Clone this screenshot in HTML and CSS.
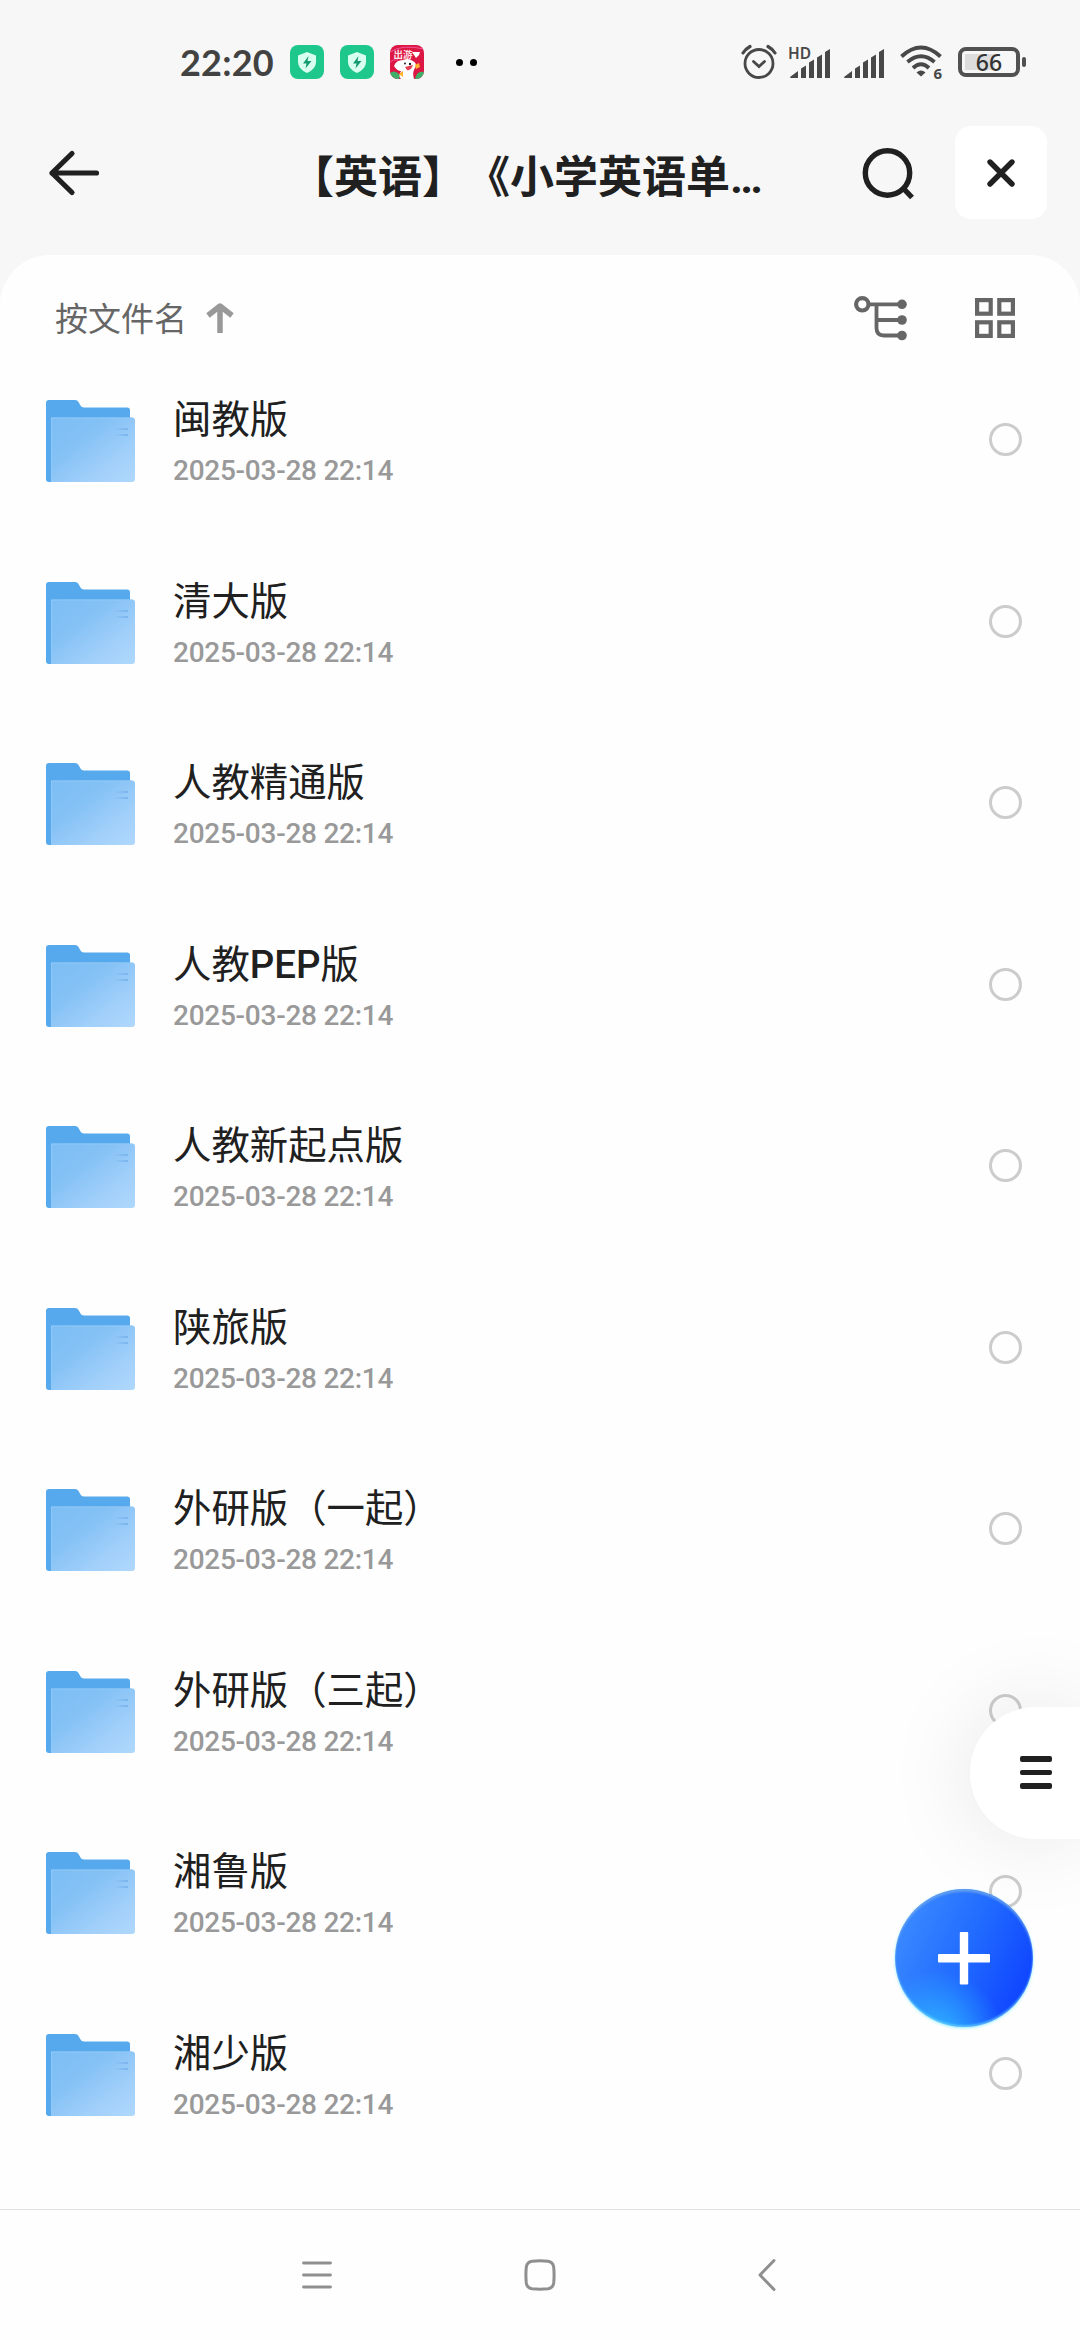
FILE: index.html
```html
<!DOCTYPE html>
<html lang="zh-CN">
<head>
<meta charset="utf-8">
<title>文件列表</title>
<link rel="stylesheet" href="styles.css">
</head>
<body>
<svg class="defs" width="0" height="0" aria-hidden="true">
  <defs>
    <linearGradient id="front" x1="0" y1="0" x2="1" y2="1">
      <stop offset="0" stop-color="#7cbef4"/><stop offset=".35" stop-color="#84c1f5"/><stop offset=".7" stop-color="#a0cffa"/><stop offset="1" stop-color="#b0d8fc"/>
    </linearGradient>
    <linearGradient id="mark" x1="0" x2="1">
      <stop offset="0" stop-color="#7ab5ee" stop-opacity=".2"/><stop offset="1" stop-color="#7ab4ec"/>
    </linearGradient>
    <symbol id="folder" viewBox="0 0 90 82">
      <path fill="#55a9ec" d="M3 0H29Q31.500 0 32.500 2L34.500 5.500Q35.500 7.500 38 7.500H81Q84 7.500 84 10.500V30H6V82H3Q0 82 0 79V3Q0 0 3 0Z"/>
      <path fill="url(#front)" d="M5 17.500H86Q89 17.500 89 20.500V79Q89 82 86 82H5Z"/>
      <path fill="none" stroke="#91c8f7" stroke-width="1" d="M5.500 81V18H86"/>
      <path fill="url(#mark)" d="M70 28H82V30H70ZM70 34H82V36H70Z"/>
    </symbol>
    <symbol id="guard" viewBox="0 0 34 34">
      <rect width="34" height="34" rx="8" fill="#1ec78c"/>
      <path fill="#d9fff0" d="M17 7L26 10.500V17Q26 24 17 28Q8 24 8 17V10.500Z"/>
      <path fill="#159b72" d="M18.500 11L13 18.500H16.500L15.500 23.500L21.500 16H17.500Z"/>
    </symbol>
    <symbol id="signal" viewBox="0 0 41 30">
      <path fill="#484848" d="M0 28L8 22V29H1Q0 29 0 28ZM11 19.500L16 16.500V29H11ZM19 13.500L24 10.500V29H19ZM27 8.500L32 5.500V29H27ZM35 3L40 0V29H35Z"/>
    </symbol>
  </defs>
</svg>

<div class="screen">
  <div class="status">
    <div class="status-left">
      <span class="clock">22:20</span>
      <svg class="app" width="34" height="34"><use href="#guard"/></svg>
      <svg class="app" width="34" height="34"><use href="#guard"/></svg>
      <svg class="app" width="34" height="34" viewBox="0 0 34 34">
        <clipPath id="round"><rect width="34" height="34" rx="8"/></clipPath>
        <g clip-path="url(#round)">
          <rect width="34" height="34" fill="#dc1743"/>
          <path fill="none" stroke="#f0569a" d="M0 7Q12 -1 34 4M0 17Q3 14 8 15"/>
          <path fill="#3fae69" d="M0 28Q5 24 10 30L9 34H0ZM34 27Q27 25 25 34H34Z"/>
          <path fill="#fff" d="M4 21Q6 15 13 15Q18 13 22 15.500Q28 18 25 23Q22 27 24 34H11Q8 31 11 26Q7 26 4 21Z"/>
          <path fill="#e23b52" d="M15 22L23 20Q21 26 17 25Z"/>
          <path fill="#ffb32c" d="M25 20L29 18L30 22L26 24ZM9 29L13 26V32Z"/>
          <circle cx="15" cy="18.500" r="1" fill="#222"/><circle cx="20" cy="19" r="1.200" fill="#222"/>
          <path fill="#fff" d="M22 7H30L29 10L26 13L24 10Z"/>
        </g>
        <text class="badge" x="3.500" y="12.800">出游</text>
      </svg>
      <span class="dots"><i></i><i></i></span>
    </div>
    <div class="status-right">
      <svg width="36" height="36" viewBox="741 44 36 36" fill="none" stroke="#484848" stroke-linecap="round">
        <circle cx="759" cy="63.500" r="14" stroke-width="2.800"/>
        <path stroke-width="2.800" d="M753.500 61.500L759 66.500L764.500 61.500"/>
        <path stroke-width="3.200" d="M743 53Q745.500 49 750 46.500M768 46.500Q772.500 49 775 53"/>
      </svg>
      <svg width="43" height="36" viewBox="788 42 43 36">
        <text class="hd" x="788" y="57">HD</text>
        <use href="#signal" x="790" y="47" width="41" height="30"/>
      </svg>
      <svg class="second" width="41" height="36" viewBox="0 -5 41 36"><use href="#signal" width="41" height="30"/></svg>
      <svg class="wifi" width="44" height="36" viewBox="900 45 44 36">
        <g fill="none" stroke="#484848" stroke-width="3.800">
          <path d="M901.500 57.500Q921 39.500 940.500 57.500"/>
          <path d="M907.500 63Q921 51.500 934.500 63"/>
          <path d="M913 69Q921 61.500 929 69"/>
        </g>
        <path fill="#484848" d="M916.500 73.500Q921 69.500 925.500 73.500L921 77.500Z"/>
        <text class="six" x="933.500" y="80">6</text>
      </svg>
      <div class="battery"><span>66</span></div>
    </div>
  </div>

  <header class="header">
    <svg width="52" height="50" viewBox="48 149.500 52 50" fill="none" stroke="#202020" stroke-width="5.200" stroke-linecap="round" stroke-linejoin="round"><path d="M96.500 174.500H52M72 155L52 174.500L72 194"/></svg>
    <h1 class="title">【英语】《小学英语单…</h1>
    <svg class="search" width="54" height="56" viewBox="0 0 54 56" fill="none" stroke="#202020" stroke-width="5.400"><circle cx="25.500" cy="28" r="22.200"/><path d="M41.500 43.500L50 52.500"/></svg>
    <div class="close"><svg width="30" height="30" viewBox="0 0 30 30" stroke="#202020" stroke-width="5.400" stroke-linecap="round"><path d="M4 4L26 26M26 4L4 26"/></svg></div>
  </header>

  <main class="panel">
    <div class="sort">
      <span class="sort-name">按文件名</span>
      <svg width="28" height="30" viewBox="0 0 28 30" fill="none" stroke="#999" stroke-width="5.500" stroke-linejoin="round"><path d="M14 30V4M2 12.500L14 3L26 12.500"/></svg>
      <svg class="tree" width="54" height="46" viewBox="854 295 54 46" fill="none" stroke="#666" stroke-width="3.800">
        <circle cx="862.300" cy="304.300" r="6.200" stroke-width="4.200"/>
        <path d="M870 304.300H902M876.500 305V328Q876.500 335.500 884 335.500H902M877 320H902"/>
        <g fill="#666" stroke="none"><circle cx="902" cy="304.300" r="4.800"/><circle cx="902" cy="320" r="4.800"/><circle cx="902" cy="335.500" r="4.800"/></g>
      </svg>
      <svg class="grid" width="40" height="40" viewBox="0 0 40 40" fill="none" stroke="#666" stroke-width="4.200"><rect x="2.100" y="2.100" width="13.600" height="13.600"/><rect x="24.300" y="2.100" width="13.600" height="13.600"/><rect x="2.100" y="24.300" width="13.600" height="13.600"/><rect x="24.300" y="24.300" width="13.600" height="13.600"/></svg>
    </div>

    <ul class="files">
      <li><svg class="folder"><use href="#folder"/></svg><div><p class="name">闽教版</p><p class="date">2025-03-28 22:14</p></div><i class="pick"></i></li>
      <li><svg class="folder"><use href="#folder"/></svg><div><p class="name">清大版</p><p class="date">2025-03-28 22:14</p></div><i class="pick"></i></li>
      <li><svg class="folder"><use href="#folder"/></svg><div><p class="name">人教精通版</p><p class="date">2025-03-28 22:14</p></div><i class="pick"></i></li>
      <li><svg class="folder"><use href="#folder"/></svg><div><p class="name">人教<b>PEP</b>版</p><p class="date">2025-03-28 22:14</p></div><i class="pick"></i></li>
      <li><svg class="folder"><use href="#folder"/></svg><div><p class="name">人教新起点版</p><p class="date">2025-03-28 22:14</p></div><i class="pick"></i></li>
      <li><svg class="folder"><use href="#folder"/></svg><div><p class="name">陕旅版</p><p class="date">2025-03-28 22:14</p></div><i class="pick"></i></li>
      <li><svg class="folder"><use href="#folder"/></svg><div><p class="name">外研版（一起）</p><p class="date">2025-03-28 22:14</p></div><i class="pick"></i></li>
      <li><svg class="folder"><use href="#folder"/></svg><div><p class="name">外研版（三起）</p><p class="date">2025-03-28 22:14</p></div><i class="pick"></i></li>
      <li><svg class="folder"><use href="#folder"/></svg><div><p class="name">湘鲁版</p><p class="date">2025-03-28 22:14</p></div><i class="pick"></i></li>
      <li><svg class="folder"><use href="#folder"/></svg><div><p class="name">湘少版</p><p class="date">2025-03-28 22:14</p></div><i class="pick"></i></li>
    </ul>
  </main>

  <nav class="nav">
    <svg width="30" height="32" viewBox="0 0 30 32" stroke="#8f8f8f" stroke-width="2.800" stroke-linecap="round"><path d="M1.500 4H28.500M1.500 16H28.500M1.500 28H28.500"/></svg>
    <svg class="home" width="32" height="32" viewBox="0 0 32 32" fill="none" stroke="#8f8f8f" stroke-width="3"><path d="M8 2.200Q16 1.300 24 2.200Q29 3 29.700 8Q30.500 16 29.700 24Q29 29 24 29.800Q16 30.700 8 29.800Q3 29 2.300 24Q1.500 16 2.300 8Q3 3 8 2.200Z"/></svg>
    <svg width="18" height="32" viewBox="0 0 18 32" fill="none" stroke="#8f8f8f" stroke-width="3" stroke-linecap="round" stroke-linejoin="round"><path d="M16 1.500L2 16L16 30.500"/></svg>
  </nav>

  <div class="drawer"><i></i><i></i><i></i></div>
  <div class="add"><svg width="54" height="54" viewBox="0 0 54 54" fill="#fff"><rect x="1" y="23" width="52" height="8.500" rx="1"/><rect x="22.800" y="1" width="8.400" height="52.500" rx="1"/></svg></div>
</div>
</body>
</html>
```
FILE: styles.css
```css
* { box-sizing: border-box; margin: 0; padding: 0; }

body {
  width: 1080px;
  height: 2340px;
  overflow: hidden;
  background: #f7f7f7;
  font-family: Roboto, "Noto Sans CJK SC", sans-serif;
  color: #202020;
  text-spacing-trim: space-all;
}

svg { display: block; flex: none; overflow: visible; }
.defs { position: absolute; }
i { display: block; }

.screen {
  position: relative;
  display: flex;
  flex-direction: column;
  height: 2340px;
}

/* status bar */
.status {
  display: flex;
  justify-content: space-between;
  align-items: center;
  height: 124px;
  padding: 0 54px 0 180px;
}
.status-left, .status-right { display: flex; align-items: center; }
.clock {
  width: 110px;
  font: 700 36px/40px Lato, sans-serif;
  letter-spacing: 0.2px;
  color: #424242;
}
.app { margin-right: 16px; }
.badge { font-size: 9.5px; font-weight: 700; fill: #ffe3e8; }
.dots { display: flex; gap: 7px; margin-left: 16px; }
.dots i { width: 7px; height: 7px; border-radius: 50%; background: #000; }
.status-right > svg { margin-right: 11px; }
.status-right > .second { margin: 0 15px 0 2px; }
.status-right > .wifi { margin-right: 14px; }
.hd { font: 600 15.500px "Noto Sans", sans-serif; fill: #484848; }
.six { font: 700 15px "Noto Sans", sans-serif; fill: #484848; }
.battery {
  position: relative;
  width: 62px;
  height: 30px;
  margin-right: 6px;
  border: 4px solid #515151;
  border-radius: 8px;
  background: linear-gradient(90deg, #ddd 30px, transparent 30px) 3px 3px / 44px 16px no-repeat;
  font: 500 23px/23px "Noto Sans", sans-serif;
  text-align: center;
  color: #333;
}
.battery::after {
  content: "";
  position: absolute;
  right: -10px;
  top: 6px;
  width: 4px;
  height: 10px;
  border-radius: 2px;
  background: #515151;
}

/* header */
.header {
  display: flex;
  align-items: center;
  height: 97px;
  margin-bottom: 34px;
  padding: 0 33px 0 48px;
}
.title {
  width: 500px;
  margin: 10px 0 0 190px;
  font-size: 44px;
  line-height: 60px;
  font-weight: 700;
  white-space: nowrap;
}
.search { margin-left: 72px; }
.close {
  display: flex;
  align-items: center;
  justify-content: center;
  width: 92px;
  height: 93px;
  margin-left: auto;
  border-radius: 16px;
  background: #fff;
}

/* list panel */
.panel {
  flex: 1;
  border-radius: 50px 50px 0 0;
  background: #fefefe;
}
.sort {
  display: flex;
  align-items: center;
  height: 130px;
  margin-bottom: 5px;
  padding: 0 65px 0 55px;
}
.sort-name {
  width: 151px;
  font-size: 33px;
  line-height: 40px;
  color: #666;
}
.sort > svg { margin-top: -5px; }
.sort > .tree { margin: -4px 67px 0 auto; }
.sort > .grid { margin-top: -4px; }

.files { list-style: none; }
.files li {
  display: flex;
  align-items: flex-start;
  height: 181.500px;
  padding: 0 58px 0 46px;
}
.folder { width: 90px; height: 82px; margin: 10px 37px 0 0; }
.name {
  margin-top: 2px;
  font-size: 38.4px;
  line-height: 56px;
}
.name b { font-weight: 500; }
.date {
  margin-top: 5px;
  font-size: 28px;
  line-height: 36px;
  font-weight: 500;
  letter-spacing: -0.26px;
  color: #999;
}
.pick {
  width: 33px;
  height: 33px;
  margin: 33px 0 0 auto;
  border: 3px solid #ccc;
  border-radius: 50%;
}

/* system navigation */
.nav {
  display: flex;
  align-items: center;
  height: 131px;
  padding-left: 302px;
  border-top: 1px solid #e0e0e0;
  background: #fefefe;
}
.nav .home { margin: 0 202px 0 192px; }

/* floating controls */
.drawer {
  position: absolute;
  right: 0;
  top: 1707px;
  display: flex;
  flex-direction: column;
  gap: 8px;
  width: 110px;
  height: 132px;
  padding: 49px 0 0 50px;
  border-radius: 66px 0 0 66px;
  background: #fff;
  box-shadow: 0 0 90px rgba(0, 0, 0, 0.1);
}
.drawer i { width: 32px; height: 5.500px; border-radius: 2px; background: #202020; }
.add {
  position: absolute;
  left: 895px;
  top: 1889px;
  display: flex;
  align-items: center;
  justify-content: center;
  width: 138px;
  height: 138px;
  border-radius: 50%;
  background:
    radial-gradient(circle at 30% 108%, #30b8ff 0, rgba(48, 184, 255, 0) 38%),
    linear-gradient(115deg, #3b8aff 10%, #2069ff 52%, #0f45ff 88%);
  box-shadow: inset 0 3px 2px rgba(110, 165, 235, 0.75), inset 0 -2px 2px rgba(110, 220, 255, 0.6), 0 1px 3px rgba(120, 235, 255, 0.8);
}
```
